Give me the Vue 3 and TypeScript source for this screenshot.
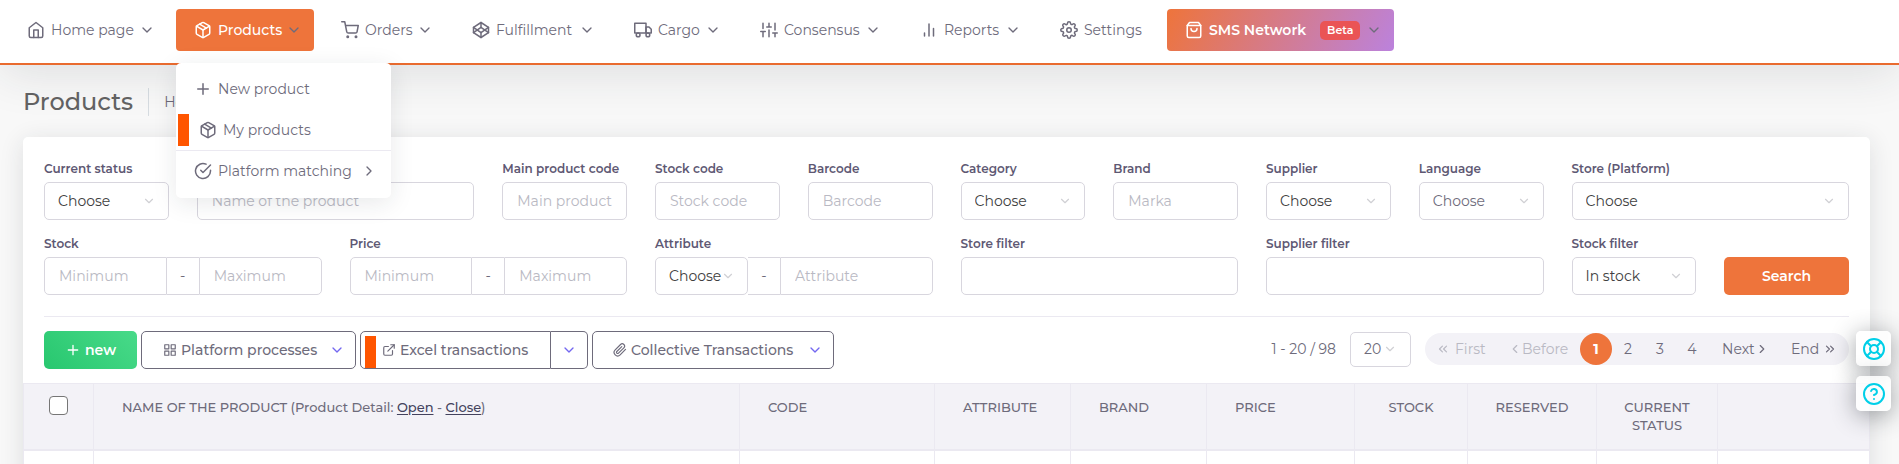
<script setup lang="ts">
import { ref } from 'vue'

const icons: Record<string, string> = {
  home: '<path d="M3 9l9-7 9 7v11a2 2 0 0 1-2 2H5a2 2 0 0 1-2-2z"/><path d="M9 22V12h6v10"/>',
  box: '<path d="M16.5 9.4l-9-5.19"/><path d="M21 16V8a2 2 0 0 0-1-1.73l-7-4a2 2 0 0 0-2 0l-7 4A2 2 0 0 0 3 8v8a2 2 0 0 0 1 1.73l7 4a2 2 0 0 0 2 0l7-4A2 2 0 0 0 21 16z"/><path d="M3.27 6.96L12 12.01l8.73-5.05"/><path d="M12 22.08V12"/>',
  cart: '<circle cx="9" cy="21" r="1"/><circle cx="20" cy="21" r="1"/><path d="M1 1h4l2.68 13.39a2 2 0 0 0 2 1.61h9.72a2 2 0 0 0 2-1.61L23 6H6"/>',
  codepen: '<path d="M12 2l10 6.5v7L12 22 2 15.5v-7z"/><path d="M12 22v-6.5"/><path d="M22 8.5l-10 7-10-7"/><path d="M2 15.5l10-7 10 7"/><path d="M12 2v6.5"/>',
  truck: '<path d="M1 3h15v13H1z"/><path d="M16 8h4l3 3v5h-7z"/><circle cx="5.5" cy="18.5" r="2.5"/><circle cx="18.5" cy="18.5" r="2.5"/>',
  sliders: '<path d="M4 21v-7M4 10V3M12 21v-9M12 8V3M20 21v-5M20 12V3M1 14h6M9 8h6M17 16h6"/>',
  bars: '<path d="M12 20V4M18 20V10M6 20v-4"/>',
  settings: '<circle cx="12" cy="12" r="3"/><path d="M19.4 15a1.65 1.65 0 0 0 .33 1.82l.06.06a2 2 0 0 1 0 2.83 2 2 0 0 1-2.83 0l-.06-.06a1.65 1.65 0 0 0-1.82-.33 1.65 1.65 0 0 0-1 1.51V21a2 2 0 0 1-2 2 2 2 0 0 1-2-2v-.09A1.65 1.65 0 0 0 9 19.4a1.65 1.65 0 0 0-1.82.33l-.06.06a2 2 0 0 1-2.83 0 2 2 0 0 1 0-2.83l.06-.06a1.65 1.65 0 0 0 .33-1.82 1.65 1.65 0 0 0-1.51-1H3a2 2 0 0 1-2-2 2 2 0 0 1 2-2h.09A1.65 1.65 0 0 0 4.6 9a1.65 1.65 0 0 0-.33-1.82l-.06-.06a2 2 0 0 1 0-2.83 2 2 0 0 1 2.83 0l.06.06a1.65 1.65 0 0 0 1.82.33H9a1.65 1.65 0 0 0 1-1.51V3a2 2 0 0 1 2-2 2 2 0 0 1 2 2v.09a1.65 1.65 0 0 0 1 1.51 1.65 1.65 0 0 0 1.82-.33l.06-.06a2 2 0 0 1 2.83 0 2 2 0 0 1 0 2.83l-.06.06a1.65 1.65 0 0 0-.33 1.82V9a1.65 1.65 0 0 0 1.51 1H21a2 2 0 0 1 2 2 2 2 0 0 1-2 2h-.09a1.65 1.65 0 0 0-1.51 1z"/>',
  bag: '<path d="M6 2L3 6v14a2 2 0 0 0 2 2h14a2 2 0 0 0 2-2V6l-3-4z"/><path d="M3 6h18"/><path d="M16 10a4 4 0 0 1-8 0"/>',
  down: '<path d="M6 9l6 6 6-6"/>',
  right: '<path d="M9 18l6-6-6-6"/>',
  left: '<path d="M15 18l-6-6 6-6"/>',
  rights: '<path d="M13 17l5-5-5-5M6 17l5-5-5-5"/>',
  lefts: '<path d="M11 17l-5-5 5-5M18 17l-5-5 5-5"/>',
  plus: '<path d="M12 5v14M5 12h14"/>',
  check: '<path d="M22 11.08V12a10 10 0 1 1-5.93-9.14"/><path d="M22 4L12 14.01l-3-3"/>',
  grid: '<path d="M3 3h7v7H3zM14 3h7v7h-7zM14 14h7v7h-7zM3 14h7v7H3z"/>',
  external: '<path d="M18 13v6a2 2 0 0 1-2 2H5a2 2 0 0 1-2-2V8a2 2 0 0 1 2-2h6"/><path d="M15 3h6v6"/><path d="M10 14L21 3"/>',
  clip: '<path d="M21.44 11.05l-9.19 9.19a6 6 0 0 1-8.49-8.49l9.19-9.19a4 4 0 0 1 5.66 5.66l-9.2 9.19a2 2 0 0 1-2.83-2.83l8.49-8.48"/>',
  buoy: '<circle cx="12" cy="12" r="10"/><circle cx="12" cy="12" r="4"/><path d="M4.93 4.93l4.24 4.24M14.83 14.83l4.24 4.24M14.83 9.17l4.24-4.24M4.93 19.07l4.24-4.24"/>',
  help: '<circle cx="12" cy="12" r="10"/><path d="M9.09 9a3 3 0 0 1 5.83 1c0 2-3 3-3 3"/><path d="M12 17h.01"/>',
}

interface NavItem { label: string; icon: string; kind?: 'active' | 'promo'; plain?: boolean }
const nav: NavItem[] = [
  { label: 'Home page', icon: 'home' },
  { label: 'Products', icon: 'box', kind: 'active' },
  { label: 'Orders', icon: 'cart' },
  { label: 'Fulfillment', icon: 'codepen' },
  { label: 'Cargo', icon: 'truck' },
  { label: 'Consensus', icon: 'sliders' },
  { label: 'Reports', icon: 'bars' },
  { label: 'Settings', icon: 'settings', plain: true },
  { label: 'SMS Network', icon: 'bag', kind: 'promo' },
]

interface Field {
  id: string
  label?: string
  type: 'select' | 'text' | 'range' | 'attribute'
  text?: string
  wide?: boolean
  muted?: boolean
}
const fields: Field[] = [
  { id: 'status', label: 'Current status', type: 'select', text: 'Choose' },
  { id: 'name', type: 'text', text: 'Name of the product', wide: true },
  { id: 'main-code', label: 'Main product code', type: 'text', text: 'Main product code' },
  { id: 'stock-code', label: 'Stock code', type: 'text', text: 'Stock code' },
  { id: 'barcode', label: 'Barcode', type: 'text', text: 'Barcode' },
  { id: 'category', label: 'Category', type: 'select', text: 'Choose' },
  { id: 'brand', label: 'Brand', type: 'text', text: 'Marka' },
  { id: 'supplier', label: 'Supplier', type: 'select', text: 'Choose' },
  { id: 'language', label: 'Language', type: 'select', text: 'Choose', muted: true },
  { id: 'store', label: 'Store (Platform)', type: 'select', text: 'Choose', wide: true },
  { id: 'stock', label: 'Stock', type: 'range', wide: true },
  { id: 'price', label: 'Price', type: 'range', wide: true },
  { id: 'attribute', label: 'Attribute', type: 'attribute', text: 'Choose', wide: true },
  { id: 'store-filter', label: 'Store filter', type: 'text', text: '', wide: true },
  { id: 'supplier-filter', label: 'Supplier filter', type: 'text', text: '', wide: true },
  { id: 'stock-filter', label: 'Stock filter', type: 'select', text: 'In stock' },
]

const pages = [1, 2, 3, 4]
const current = ref(1)
const allChecked = ref(false)
</script>

<template>
  <div class="page">
    <header class="topbar">
      <nav class="nav">
        <div v-for="item in nav" :key="item.label" class="nav-cell">
          <button type="button" class="nav-item" :class="item.kind">
            <svg class="icon" viewBox="0 0 24 24" v-html="icons[item.icon]" />
            <span class="nav-label">{{ item.label }}</span>
            <span v-if="item.kind === 'promo'" class="badge">Beta</span>
            <svg v-if="!item.plain" class="icon caret" viewBox="0 0 24 24" v-html="icons.down" />
          </button>
          <div v-if="item.kind === 'active'" class="menu">
            <a href="#" class="menu-item"><svg class="icon" viewBox="0 0 24 24" v-html="icons.plus" />New product</a>
            <a href="#" class="menu-item marked">
              <span class="marker" /><svg class="icon" viewBox="0 0 24 24" v-html="icons.box" />My products
            </a>
            <a href="#" class="menu-item divided">
              <svg class="icon" viewBox="0 0 24 24" v-html="icons.check" />Platform matching
              <svg class="icon caret" viewBox="0 0 24 24" v-html="icons.right" />
            </a>
          </div>
        </div>
      </nav>
    </header>

    <div class="heading">
      <h1>Products</h1>
      <a href="#" class="crumb">Home page</a>
    </div>

    <main class="card">
      <form class="filters" @submit.prevent>
        <div v-for="f in fields" :key="f.id" class="field" :class="{ wide: f.wide }">
          <label v-if="f.label" :for="f.id">{{ f.label }}</label>
          <div v-if="f.type === 'select'" class="select" :class="{ muted: f.muted }">
            <select :id="f.id"><option>{{ f.text }}</option></select>
            <svg class="icon small" viewBox="0 0 24 24" v-html="icons.down" />
          </div>
          <input
            v-else-if="f.type === 'text'" :id="f.id" type="text" :placeholder="f.text"
            :aria-label="f.label ? undefined : f.text"
          >
          <div v-else-if="f.type === 'range'" class="group">
            <input :id="f.id" type="text" placeholder="Minimum">
            <span class="dash">-</span>
            <input type="text" placeholder="Maximum" :aria-label="f.label + ' maximum'">
          </div>
          <div v-else class="group">
            <div class="select narrow">
              <select :id="f.id"><option>{{ f.text }}</option></select>
              <svg class="icon small" viewBox="0 0 24 24" v-html="icons.down" />
            </div>
            <span class="dash">-</span>
            <input type="text" placeholder="Attribute" aria-label="Attribute value">
          </div>
        </div>
        <button type="submit" class="search">Search</button>
      </form>

      <div class="toolbar">
        <button type="button" class="btn new"><svg class="icon caret-size" viewBox="0 0 24 24" v-html="icons.plus" />new</button>
        <button type="button" class="btn platform">
          <svg class="icon small" viewBox="0 0 24 24" v-html="icons.grid" />Platform processes
          <svg class="icon caret" viewBox="0 0 24 24" v-html="icons.down" />
        </button>
        <div class="split">
          <button type="button" class="btn excel">
            <span class="marker" /><svg class="icon small" viewBox="0 0 24 24" v-html="icons.external" />Excel transactions
          </button>
          <button type="button" class="btn toggle" aria-label="More Excel transactions">
            <svg class="icon caret" viewBox="0 0 24 24" v-html="icons.down" />
          </button>
        </div>
        <button type="button" class="btn collective">
          <svg class="icon small" viewBox="0 0 24 24" v-html="icons.clip" />Collective Transactions
          <svg class="icon caret" viewBox="0 0 24 24" v-html="icons.down" />
        </button>

        <div class="paging">
          <span class="count">1 - 20 / 98</span>
          <div class="select size muted">
            <select aria-label="Rows per page"><option>20</option></select>
            <svg class="icon small" viewBox="0 0 24 24" v-html="icons.down" />
          </div>
          <div class="pager">
            <button type="button" class="first" disabled><svg class="icon small" viewBox="0 0 24 24" v-html="icons.lefts" />First</button>
            <button type="button" class="before" disabled><svg class="icon small" viewBox="0 0 24 24" v-html="icons.left" />Before</button>
            <button
              v-for="p in pages" :key="p" type="button" class="num" :class="{ current: p === current }"
              @click="current = p"
            >{{ p }}</button>
            <button type="button" class="next">Next<svg class="icon small" viewBox="0 0 24 24" v-html="icons.right" /></button>
            <button type="button" class="end">End<svg class="icon small" viewBox="0 0 24 24" v-html="icons.rights" /></button>
          </div>
        </div>
      </div>

      <table>
        <colgroup>
          <col class="c-check"><col><col class="c-code"><col class="c-mid"><col class="c-mid">
          <col class="c-price"><col class="c-stock"><col class="c-reserved"><col class="c-status"><col class="c-actions">
        </colgroup>
        <thead>
          <tr>
            <th class="check"><input v-model="allChecked" type="checkbox" aria-label="Select all products"></th>
            <th>NAME OF THE PRODUCT (Product Detail: <a href="#">Open</a> - <a href="#">Close</a>)</th>
            <th>CODE</th>
            <th>ATTRIBUTE</th>
            <th>BRAND</th>
            <th>PRICE</th>
            <th class="mid">STOCK</th>
            <th class="mid">RESERVED</th>
            <th class="mid">CURRENT STATUS</th>
            <th />
          </tr>
        </thead>
        <tbody>
          <tr><td v-for="n in 10" :key="n" /></tr>
        </tbody>
      </table>
    </main>

    <aside class="floating">
      <button type="button" aria-label="Support"><svg class="icon" viewBox="0 0 24 24" v-html="icons.buoy" /></button>
      <button type="button" aria-label="Help"><svg class="icon" viewBox="0 0 24 24" v-html="icons.help" /></button>
    </aside>
  </div>
</template>

<style>
body {
  margin: 0;
  background: #f8f8f8;
}
</style>

<style scoped>
.page,
.page * {
  box-sizing: border-box;
}
.page {
  height: 100vh;
  overflow: hidden;
  display: flex;
  flex-direction: column;
  background: #f8f8f8;
  color: #6e6b7b;
  font-family: Montserrat, Inter, "Open Sans", sans-serif;
  font-size: 14px;
  font-weight: 400;
  line-height: 20px;
}
button,
input,
select {
  font: inherit;
  color: inherit;
  margin: 0;
}
button {
  padding: 0;
  border: 0;
  background: none;
  white-space: nowrap;
  cursor: pointer;
}
a {
  color: inherit;
  text-decoration: none;
}
.icon {
  flex: none;
  width: 18px;
  height: 18px;
  fill: none;
  stroke: currentColor;
  stroke-width: 2;
  stroke-linecap: round;
  stroke-linejoin: round;
}
.icon.small {
  width: 14px;
  height: 14px;
}
.icon.caret,
.icon.caret-size {
  width: 16px;
  height: 16px;
}

/* Top navigation */
.topbar {
  flex: none;
  position: relative;
  z-index: 2;
  height: 65px;
  padding: 9px 9px 0;
  background: #fff;
  border-bottom: 2px solid #e96b2f;
  box-shadow: 0 8px 48px rgba(34, 41, 47, 0.12);
}
.nav {
  display: grid;
  grid-template-columns: 158px 138px 122px 153px 117px 151px 131px 116px 227px;
  gap: 9px;
}
.nav-cell {
  position: relative;
}
.nav-item {
  display: flex;
  align-items: center;
  width: 100%;
  height: 42px;
  padding: 0 12px 0 18px;
  border-radius: 4px;
}
.nav-label {
  margin-left: 6px;
}
.caret {
  margin-left: auto;
}
.active,
.promo {
  color: #fff;
  font-weight: 500;
}
.active .caret,
.promo .caret {
  color: #6e6b7b;
}
.active {
  background: #ee743b;
}
.promo {
  background: linear-gradient(118deg, #ee743b, #bb82dd);
  font-weight: 600;
}
.badge {
  margin-left: 14px;
  padding: 0 7px;
  border-radius: 5px;
  background: #ea5455;
  font-size: 11px;
  line-height: 19px;
}
.menu {
  position: absolute;
  top: 54px;
  left: 0;
  width: 215px;
  padding: 5px 0 7px;
  border-radius: 5px;
  background: #fff;
  box-shadow: 0 5px 25px rgba(34, 41, 47, 0.1);
}
.menu-item {
  display: flex;
  align-items: center;
  gap: 6px;
  height: 41px;
  padding: 0 14px 0 18px;
  white-space: nowrap;
}
.menu-item.marked {
  padding-left: 2px;
}
.marker {
  flex: none;
  width: 11px;
  height: 32px;
  background: #ff5500;
}
.menu-item .marker {
  margin-right: 4px;
}
.menu-item.divided {
  border-top: 1px solid #ebe9f1;
}

/* Page heading */
.heading {
  flex: none;
  display: flex;
  align-items: center;
  height: 72px;
  padding: 2px 23px 0;
}
h1 {
  margin: 0;
  padding-right: 15px;
  border-right: 1px solid #d6dce1;
  color: #636363;
  font-size: 24px;
  font-weight: 500;
  line-height: 28px;
}
.crumb {
  padding-left: 15px;
}

/* Card and filters */
.card {
  flex: 1 0 auto;
  margin: 0 29px 0 23px;
  border-radius: 5px 5px 0 0;
  background: #fff;
  box-shadow: 0 4px 24px rgba(34, 41, 47, 0.12);
}
.filters {
  display: grid;
  grid-template-columns: repeat(12, minmax(0, 1fr));
  gap: 15px 28px;
  align-items: end;
  margin: 0 21px;
  padding: 23px 0 21px;
  border-bottom: 1px solid #ebe9f1;
}
.field {
  display: flex;
  flex-direction: column;
  gap: 4px;
}
.wide {
  grid-column: span 2;
}
label {
  color: #5e5873;
  font-size: 12px;
  font-weight: 600;
  line-height: 18px;
  white-space: nowrap;
}
input[type="text"],
select {
  width: 100%;
  min-width: 0;
  height: 38px;
  padding: 0 14px;
  border: 1px solid #d8d6de;
  border-radius: 5px;
  background: #fff;
  appearance: none;
}
input::placeholder {
  color: #b9b9c3;
  opacity: 1;
}
select {
  padding: 0 13px;
  color: #404040;
}
.muted select {
  color: #6e6b7b;
}
.select {
  display: grid;
  align-items: center;
}
.select > * {
  grid-area: 1 / 1;
}
.select .icon {
  justify-self: end;
  margin-right: 13px;
  color: #d0d0d4;
  pointer-events: none;
}
.group {
  display: flex;
}
.group input:first-child {
  border-radius: 5px 0 0 5px;
}
.group input:last-child {
  border-radius: 0 5px 5px 0;
}
.dash {
  flex: none;
  width: 32px;
  border: solid #d8d6de;
  border-width: 1px 0;
  line-height: 36px;
  text-align: center;
}
.narrow {
  flex: none;
  width: 93px;
}
.search {
  height: 38px;
  border-radius: 5px;
  background: #ee743b;
  color: #fff;
  font-weight: 600;
}

/* Actions above the table */
.toolbar {
  display: flex;
  align-items: center;
  gap: 4px;
  padding: 14px 21px;
}
.btn {
  display: flex;
  align-items: center;
  gap: 4px;
  height: 38px;
  border: 1px solid #6e6b7b;
  border-radius: 5px;
  font-weight: 500;
}
.btn .caret {
  color: #7367f0;
}
.new {
  justify-content: center;
  width: 93px;
  border: 0;
  background: linear-gradient(45deg, #28c76f, #48da89);
  color: #fff;
  font-weight: 600;
}
.platform {
  width: 215px;
  padding: 0 10px 0 21px;
}
.split {
  display: flex;
}
.excel {
  width: 191px;
  padding-left: 4px;
  border-radius: 5px 0 0 5px;
}
.excel .marker {
  align-self: end;
  margin-right: 2px;
}
.toggle {
  justify-content: center;
  width: 37px;
  border-left: 0;
  border-radius: 0 5px 5px 0;
}
.toggle .caret {
  margin: 0;
}
.collective {
  width: 242px;
  padding: 0 10px 0 20px;
}
.paging {
  display: flex;
  align-items: center;
  gap: 14px;
  margin-left: auto;
  padding-bottom: 2px;
}
.size {
  width: 61px;
}
.size select {
  height: 35px;
}
.size .icon {
  margin-right: 14px;
}
.pager {
  display: flex;
  height: 32px;
  border-radius: 16px;
  background: #f3f2f7;
}
.pager button {
  display: flex;
  align-items: center;
}
.pager button:disabled {
  color: #b9b9c3;
}
.pager .first {
  width: 83px;
  padding-left: 11px;
  gap: 5px;
}
.pager .before {
  width: 72px;
}
.pager .num {
  justify-content: center;
  width: 32px;
  border-radius: 16px;
}
.pager .current {
  background: #ee743b;
  color: #fff;
  font-weight: 700;
}
.pager .next {
  width: 83px;
  padding-left: 14px;
}
.pager .end {
  width: 58px;
  gap: 4px;
}

/* Product table */
table {
  width: 100%;
  table-layout: fixed;
  border-collapse: collapse;
}
.c-check {
  width: 70px;
}
.c-code {
  width: 195px;
}
.c-mid {
  width: 136px;
}
.c-price {
  width: 148px;
}
.c-stock {
  width: 113px;
}
.c-reserved {
  width: 129px;
}
.c-status {
  width: 121px;
}
.c-actions {
  width: 152px;
}
th,
td {
  border: 1px solid #ebe9f1;
}
th {
  height: 66px;
  padding: 14px 0 12px 28px;
  border-bottom-width: 2px;
  background: #f3f2f7;
  font-size: 13px;
  font-weight: 500;
  line-height: 18px;
  text-align: left;
  vertical-align: top;
}
th.mid {
  padding: 14px 20px 12px;
  text-align: center;
}
th.check {
  padding: 12px 0 0 25px;
}
th a {
  color: #43425d;
  text-decoration: underline;
  text-underline-offset: 2px;
}
th input {
  display: block;
  width: 19px;
  height: 19px;
  border: 1px solid #767676;
  border-radius: 4px;
  background: #fff;
  appearance: none;
}
th input:checked {
  background: #ee743b;
}
td {
  height: 60px;
}

/* Support shortcuts */
.floating {
  position: fixed;
  z-index: 3;
  top: 331px;
  right: 8px;
  display: grid;
  gap: 10px;
}
.floating button {
  display: grid;
  place-items: center;
  width: 35px;
  height: 35px;
  border-radius: 5px;
  background: rgba(255, 255, 255, 0.8);
  box-shadow: 0 4px 24px rgba(34, 41, 47, 0.45);
  color: #00cfe8;
}
.floating .icon {
  width: 24px;
  height: 24px;
}
</style>
